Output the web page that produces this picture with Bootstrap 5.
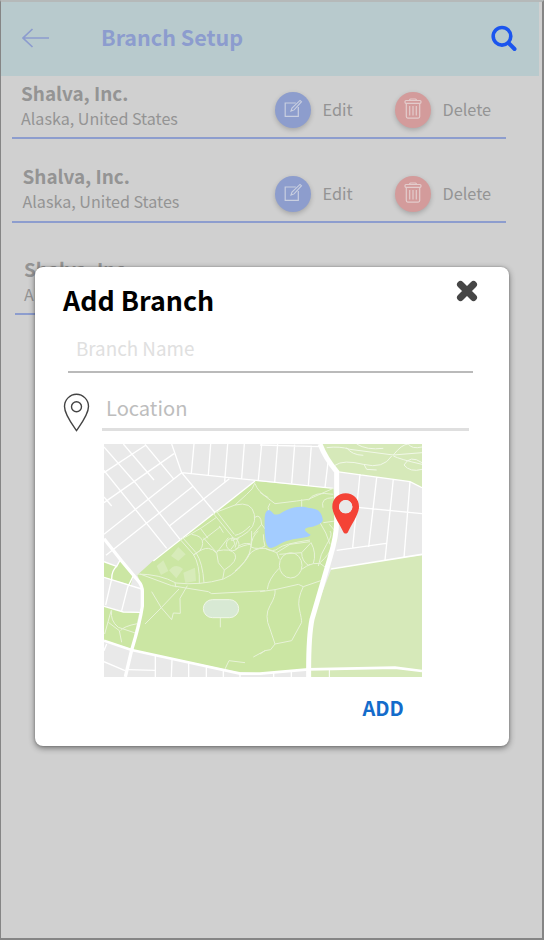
<!DOCTYPE html>
<html lang="en">
<head>
<meta charset="utf-8">
<meta name="viewport" content="width=device-width, initial-scale=1">
<title>Branch Setup</title>
<link href="https://cdn.jsdelivr.net/npm/bootstrap@5.3.0/dist/css/bootstrap.min.css" rel="stylesheet">
<style>
body{font-family:"Noto Sans CJK SC","Noto Sans",sans-serif;background:#e4e4e4}
.screen{width:544px;height:940px;background:#d0d0d0;border:solid #858585;border-width:1px 2px 2px 1px;border-top:2px solid #b5b9b9}
.topbar{width:538px;height:74px;background:#b8cacd;padding:0 22px 2px 21px}
.topbar h1{font-size:21.5px;line-height:32px;color:#8c9cce;margin:0 0 2px 52px}
.branch{width:494px;margin-left:11px;border-bottom:2px solid #8d9dce;color:#949494}
.branch h2{font-size:18.9px;line-height:26px;margin:0;font-weight:700}
.branch p{font-size:16.1px;line-height:24px;margin:0}
.b1{height:63px;padding:4px 0 0 9px}
.b2{height:84px;padding:24px 0 0 10.5px}
.b3{height:92px;padding:33px 0 0 9px;margin-left:14px}
.who{width:253.500px;flex:none}
.b2 .who{width:252px}
.b3 .who{width:250px}
.acts{padding-top:11.500px;font-size:16.3px}
.b2 .acts{padding-top:12.500px}
.act{width:120px;flex:none;gap:12px;white-space:nowrap}
.disc{width:36px;height:36px;flex:none;box-shadow:0 2px 5px #0003}
.edit-c{background:#8d9dcd}.del-c{background:#d39b9b}
.dialog-card{left:33.5px;top:264.5px;width:474px;height:479.5px;background:#fff;border-radius:8px;box-shadow:0 2px 6px #0007,0 0 2px #0004;padding:0 34.500px 0 28.500px}
.dialog-card h3{font-size:26.8px;line-height:40px;margin:13.500px 0 0;font-weight:700;color:#000}
.close-x{margin:13px -3.500px 0 0}
.field-name{margin:8px 0 0 5px;height:45px;width:405px;border-bottom:2px solid #bababa;padding:5px 0 0 8px;font-size:18.8px;line-height:30px;color:#e0e0e0}
.field-loc{width:367px;height:42px;border-bottom:3px solid #dfdfdf;padding:4px 0 0 4px;font-size:20.1px;line-height:30px;color:#bdbdbd}
.loc-row{margin-top:16px;gap:12px}
.pin{margin-top:4px}
.map{margin:12px 0 0 41px;width:318px;height:233px}
.add-btn{color:#146ccb;font-size:20px;line-height:30px;font-weight:700;margin:16px 0 0 299.500px}
</style>
<script src="https://cdn.jsdelivr.net/npm/bootstrap@5.3.0/dist/js/bootstrap.bundle.min.js"></script>
</head>
<body class="m-0 overflow-hidden">
<svg width="0" height="0" class="position-absolute">
<symbol id="edit" viewBox="0 0 36 36"><path d="M20.800 11H10.200V24.400H23.300V15" fill="none" stroke="#c9cfe0" stroke-width="1.200"/><path d="M16 19l1-3L25 8.400l1.500 1.300-7.400 8.200z" fill="none" stroke="#c9cfe0" stroke-width="1.100"/></symbol>
<symbol id="trash" viewBox="0 0 36 36"><g fill="none" stroke="#e3cccc" stroke-width="1.200"><rect x="10" y="8.500" width="16" height="2.800" rx="1"/><path d="M14.600 8.500V8q0-1 1-1h4.800q1 0 1 1v.5M11.300 11.300V24.600q0 1.500 1.500 1.500h10.400q1.500 0 1.500-1.500V11.300M14.700 14v9.500M18 14v9.500M21.300 14v9.500"/></g></symbol>
</svg>
<main class="screen position-relative overflow-hidden">
<header class="topbar d-flex align-items-center">
<svg width="27" height="20" viewBox="0 0 27 20" fill="none" stroke="#8c9cce" stroke-width="1.700"><path d="M1 10h26M10.500 1L1 10l9.500 9"/></svg>
<h1 class="fw-bold">Branch Setup</h1>
<svg class="ms-auto" width="27" height="27" viewBox="0 0 27 27" fill="none" stroke="#1b55ee"><circle cx="12" cy="11.300" r="8.800" stroke-width="3.600"/><path d="M18.500 18l6 6" stroke-width="4" stroke-linecap="round"/></svg>
</header>
<section class="branch b1 d-flex">
<div class="who"><h2>Shalva, Inc.</h2><p>Alaska, United States</p></div>
<div class="acts d-flex align-items-start"><div class="act d-flex align-items-center"><span class="disc rounded-circle edit-c d-flex"><svg width="36" height="36"><use href="#edit"/></svg></span>Edit</div><div class="act d-flex align-items-center"><span class="disc rounded-circle del-c d-flex"><svg width="36" height="36"><use href="#trash"/></svg></span>Delete</div></div>
</section>
<section class="branch b2 d-flex">
<div class="who"><h2>Shalva, Inc.</h2><p>Alaska, United States</p></div>
<div class="acts d-flex align-items-start"><div class="act d-flex align-items-center"><span class="disc rounded-circle edit-c d-flex"><svg width="36" height="36"><use href="#edit"/></svg></span>Edit</div><div class="act d-flex align-items-center"><span class="disc rounded-circle del-c d-flex"><svg width="36" height="36"><use href="#trash"/></svg></span>Delete</div></div>
</section>
<section class="branch b3 d-flex">
<div class="who"><h2>Shalva, Inc.</h2><p>Alaska, United States</p></div>
</section>
<div class="dialog-card position-absolute">
<div class="d-flex justify-content-between align-items-start"><h3>Add Branch</h3>
<svg class="close-x" width="22" height="22" viewBox="0 0 22 22"><path d="M4.500 4.500l13 13M17.500 4.500l-13 13" stroke="#464646" stroke-width="7" stroke-linecap="round"/></svg></div>
<div class="field-name">Branch Name</div>
<div class="loc-row d-flex align-items-start">
<svg width="27" height="39" viewBox="0 0 27 39" class="pin" fill="none" stroke="#444" stroke-width="1.400"><path d="M13.500 37.500C9 31 1.500 21.500 1.500 13.500a12 12.200 0 0 1 24 0C25.500 21.500 18 31 13.500 37.500z"/><circle cx="13.500" cy="13.800" r="5"/></svg>
<div class="field-loc">Location</div></div>
<svg class="map d-block" viewBox="12 9 954 699" preserveAspectRatio="none">
<rect width="980" height="720" fill="#e9e9e9"/>
<path d="M465 120L700 142 710 270 690 370 630 544 625 685 480 697 410 692 95 626 126 480 127 440 112 402 165 354zM12 362L50 376 62 358 100 404 92 432 12 409zM12 496L70 512 118 514 95 624 12 599z" fill="#cbe6a3"/>
<path d="M660 9L710 92 930 122 966 140V9zM695 382L855 357 966 343V708H625L632 544z" fill="#d6e9b9"/>
<!-- street grid, north-west -->
<g fill="none" stroke="#fff" stroke-width="4">
<path d="M12 95L138 12M12 185L222 38M12 280L245 95M18 343L280 135M160 360L465 120M208 255L388 113M12 18L110 130 240 295M70 9L162 117M12 88L200 322M12 168L35 195M135 10L222 115M215 9L245 95 345 215M245 95L700 142M282 9L274 97M332 9L325 102M383 9L374 122M433 9L425 112M485 9L475 117"/>
<path d="M533 9L524 124M584 11L575 128M634 14L625 134M685 55L675 140M480 12L660 17M780 99L758 320M830 110L806 318M880 114L855 357M930 122L912 350M720 194L966 218M710 328L858 307M710 92L930 122 966 140"/>
<path d="M693 384L966 340" stroke-width="5"/>
</g>
<!-- southern streets -->
<g transform="translate(0 354)" fill="none" stroke="#fff" stroke-width="4">
<path d="M12 8L50 22 62 0M12 55L125 90M12 142L70 159 120 160M50 22Q35 35 35 60L17 138M100 50L83 85 65 155M20 255L12 275M12 308L75 335M85 332L165 334M166 290V354M216 303L214 354M266 312V354M319 325V354M370 332V354M420 342V354M521 340V354M574 335V354"/>
<g stroke="#e9f3d9" stroke-width="3"><path d="M34 153L14 225M35 155Q30 185 55 205L112 224M62 215Q70 202 112 194M25 190L58 215 65 250"/></g>
</g>
<!-- park paths -->
<g fill="none" stroke="#e8f3d8" stroke-width="3">
<path d="M465 125Q460 145 440 160L405 192 345 215M465 128Q475 155 505 170M405 192Q455 180 463 220T425 285 400 288M463 230Q482 215 485 250M460 280L485 250 500 270"/>
<path d="M480 154L525 188 590 180 625 175 700 142M605 175V198M625 178Q640 150 700 160M700 170Q660 170 669 200M510 187Q500 200 507 212M670 245L705 240M688 250Q725 285 705 315M660 245Q680 275 690 310"/>
<g transform="translate(120 180)"><path d="M120 115L160 160Q180 190 178 248M128 110L168 155Q188 185 192 246M125 115L185 80 228 50M188 118L240 78M182 83L204 112M218 35L276 106 285 130M230 32L283 100M238 75L250 95M155 100Q190 105 188 128T160 162Q190 140 205 142T228 155M190 110L230 155M265 110L230 155 235 185 253 207 248 235M230 150Q275 140 285 160T253 207M272 146L284 130M285 103Q305 100 330 75M297 135Q310 125 330 128"/><circle cx="278" cy="130" r="19"/></g>
<g transform="translate(405 270)"><path d="M90 45Q70 58 48 48 50 15 70 0M85 10Q85 30 90 45M0 120Q35 90 40 75 55 50 90 52L125 65 165 40 225 32M90 52Q115 65 130 52T225 27M0 55Q30 40 48 40M50 0Q50 60 38 80M10 20L0 50M125 65L133 85M133 70L200 65 228 35Q245 65 235 98M200 65Q200 90 220 103L235 98 255 97M250 105Q255 70 275 40T285 0M255 95Q285 70 290 45M255 97L270 108 290 110M200 115Q215 105 225 100M132 112Q100 145 97 175"/><ellipse cx="167" cy="103" rx="34" ry="38"/></g>
<g transform="translate(0 354)"><path d="M110 45Q180 45 228 72 300 80 370 60 420 40 450 -20M120 45L215 80 325 98 335 104 495 95M225 72L228 85M155 98L183 145 215 182 220 162 241 163 240 118 262 80M135 195L180 150 237 90M361 177V205M375 330L387 305 435 311M460 294L495 275"/></g>
<g transform="translate(480 354)"><path d="M0 98L45 92 115 76 130 83 182 65M45 92Q48 110 30 140T30 210L45 255 95 245 125 190Q125 180 118 150T130 83M45 255L32 272 15 275 0 285"/></g>
</g>
<path d="M235 318l22 22-22 20-22-15zM170 375l20-17 15 32-22 12zM207 388q20-24 42-4l-20 28zM250 395l35-15 3 40-32 6z" fill="#d7ebb9"/>
<rect x="310" y="476" width="106" height="54" rx="27" fill="#d8e9d4" stroke="#f0f7e8" stroke-width="3"/>
<path d="M494 230Q495 208 508 207C525 218 516 225 540 218 575 195 605 194 627 201 649 203 663 207 668 233 671 244 658 251 638 257 605 260 612 270 632 281 625 292 598 288 568 298 540 302 520 330 505 318 492 300 494 260 494 230z" fill="#a3ccff"/>
<!-- north-east paths -->
<g fill="none" stroke="#f1f8e8" stroke-width="3"><path d="M680 20Q720 15 750 25L880 42 966 35M705 73Q730 55 790 70T875 45M880 42Q905 10 925 9M740 20Q755 42 790 43M770 9Q800 28 850 22M792 70L800 85 830 87M880 45Q900 55 966 70M912 72Q930 40 966 65M912 72Q930 95 966 85M925 9Q935 25 966 18"/></g>
<!-- main roads -->
<g fill="none" stroke="#fff">
<path d="M660 9Q675 50 710 92V240Q710 285 690 350L636 535Q625 590 626 708" stroke-width="15"/>
<path d="M12 293L65 360 115 420Q128 435 127 455V495Q120 545 95 627L76 708" stroke-width="10"/>
<path d="M12 599L95 627 420 698 480 698 625 685 885 680 966 690" stroke-width="8"/>
<path d="M688 687V708" stroke-width="3"/>
</g>
<path fill-rule="evenodd" d="M737 157c-23 0-40 17-40 40 0 24 24 55 33 76 3 6 11 6 14 0 9-21 33-52 33-76 0-23-17-40-40-40zm0 20a20 20 0 1 1 0 40 20 20 0 0 1 0-40z" fill="#f44336"/><circle cx="737" cy="197" r="20" fill="#e9e9e9"/>
</svg>
<button class="add-btn btn p-0 border-0 d-block">ADD</button>
</div>
</main>
</body>
</html>
